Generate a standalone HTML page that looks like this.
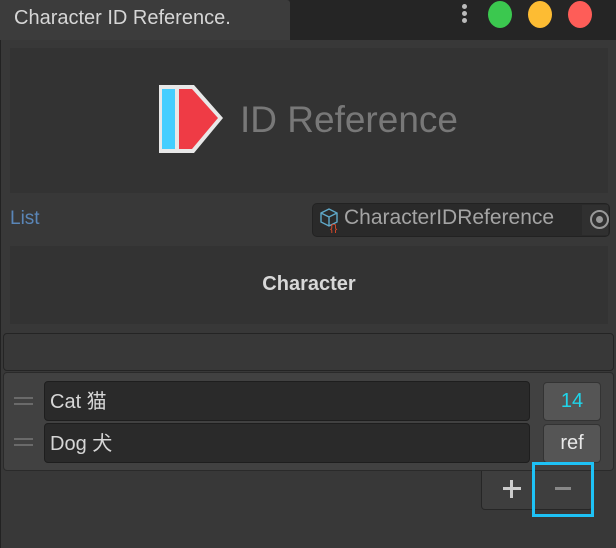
<!DOCTYPE html>
<html><head><meta charset="utf-8"><style>
*{margin:0;padding:0;box-sizing:border-box}
body{width:616px;height:548px;background:#383838;position:relative;overflow:hidden;font-family:"Liberation Sans","Noto Sans CJK SC",sans-serif;color:#d2d2d2}
.a{position:absolute}
</style></head><body>
<div class="a" style="left:0;top:0;width:616px;height:40px;background:#252525"></div>
<div class="a" style="left:0;top:0;width:290px;height:40px;background:#3c3c3c;border-radius:0 3px 0 0"></div>
<div class="a" style="left:14px;top:7px;font-size:20px;color:#d6d6d6">Character ID Reference.</div>
<div class="a" style="left:462px;top:4px;width:5px;height:5px;border-radius:50%;background:#bbb"></div>
<div class="a" style="left:462px;top:11px;width:5px;height:5px;border-radius:50%;background:#bbb"></div>
<div class="a" style="left:462px;top:18px;width:5px;height:5px;border-radius:50%;background:#bbb"></div>
<div class="a" style="left:488px;top:1px;width:24px;height:27px;border-radius:50%;background:#3bc84f"></div>
<div class="a" style="left:528px;top:1px;width:24px;height:27px;border-radius:50%;background:#fdbc33"></div>
<div class="a" style="left:568px;top:1px;width:24px;height:27px;border-radius:50%;background:#fe5d58"></div>
<div class="a" style="left:10px;top:48px;width:598px;height:145px;background:#333"></div>
<svg class="a" style="left:158px;top:84px" width="66" height="70" viewBox="0 0 66 70">
<path d="M1 1H36L65 34L36 69H1Z" fill="#e8e8e8"/>
<rect x="4" y="5" width="13" height="60" fill="#44ceff"/>
<path d="M21 5H34L60 34L34 65H21Z" fill="#ef3b45"/>
</svg>
<div class="a" style="left:240px;top:99px;font-size:37px;color:#787878">ID Reference</div>
<div class="a" style="left:10px;top:208px;font-size:19px;color:#5a86b8">List</div>
<div class="a" style="left:312px;top:203px;width:298px;height:34px;background:#2a2a2a;border-radius:5px;border:1px solid #222"></div>
<svg class="a" style="left:318px;top:207px" width="26" height="26" viewBox="0 0 26 26"><path d="M3 6L11 2L19 6V15L11 19L3 15ZM3 6L11 10L19 6M11 10V19" fill="none" stroke="#5fa8c8" stroke-width="1.4"/><text x="12" y="25" font-size="11" fill="#e04a2a" font-family="Liberation Sans">{}</text></svg>
<div class="a" style="left:344px;top:206px;font-size:21px;color:#a4a4a4">CharacterIDReference</div>
<div class="a" style="left:582px;top:205px;width:26px;height:30px;background:#303030"></div>
<div class="a" style="left:590px;top:210px;width:19px;height:19px;border-radius:50%;border:2px solid #999"></div>
<div class="a" style="left:596px;top:216px;width:7px;height:7px;border-radius:50%;background:#999"></div>
<div class="a" style="left:10px;top:246px;width:598px;height:78px;background:#333"></div>
<div class="a" style="left:10px;top:273px;width:598px;text-align:center;font-size:20px;font-weight:bold;color:#d8d8d8">Character</div>
<div class="a" style="left:3px;top:333px;width:611px;height:38px;background:#383838;border:1px solid #242424;border-radius:4px"></div>
<div class="a" style="left:3px;top:372px;width:611px;height:99px;background:#414141;border:1px solid #2a2a2a;border-radius:4px"></div>
<div class="a" style="left:14px;top:397px;width:19px;height:2px;background:#6a6a6a"></div>
<div class="a" style="left:14px;top:403px;width:19px;height:2px;background:#6a6a6a"></div>
<div class="a" style="left:14px;top:438px;width:19px;height:2px;background:#6a6a6a"></div>
<div class="a" style="left:14px;top:444px;width:19px;height:2px;background:#6a6a6a"></div>
<div class="a" style="left:44px;top:381px;width:486px;height:40px;background:#2a2a2a;border:1px solid #1e1e1e;border-radius:4px"></div>
<div class="a" style="left:44px;top:423px;width:486px;height:40px;background:#2a2a2a;border:1px solid #1e1e1e;border-radius:4px"></div>
<div class="a" style="left:50px;top:385px;font-size:20px;color:#d6d6d6">Cat 猫</div>
<div class="a" style="left:50px;top:427px;font-size:20px;color:#d6d6d6">Dog 犬</div>
<div class="a" style="left:543px;top:382px;width:58px;height:39px;background:#555;border:1px solid #333;border-radius:4px;text-align:center;line-height:36px;font-size:20px;color:#1fd5ea">14</div>
<div class="a" style="left:543px;top:424px;width:58px;height:39px;background:#555;border:1px solid #333;border-radius:4px;text-align:center;line-height:36px;font-size:20px;color:#e8e8e8">ref</div>
<div class="a" style="left:481px;top:471px;width:112px;height:39px;background:#3e3e3e;border:1px solid #262626;border-top:none;border-radius:0 0 4px 4px"></div>
<div class="a" style="left:503px;top:487px;width:18px;height:3px;background:#ccc"></div>
<div class="a" style="left:510px;top:480px;width:3px;height:18px;background:#ccc"></div>
<div class="a" style="left:555px;top:487px;width:16px;height:3px;background:#888"></div>
<div class="a" style="left:532px;top:462px;width:62px;height:55px;border:3px solid #1ec2f6"></div>
<div class="a" style="left:0;top:40px;width:1px;height:508px;background:#222"></div>
</body></html>
